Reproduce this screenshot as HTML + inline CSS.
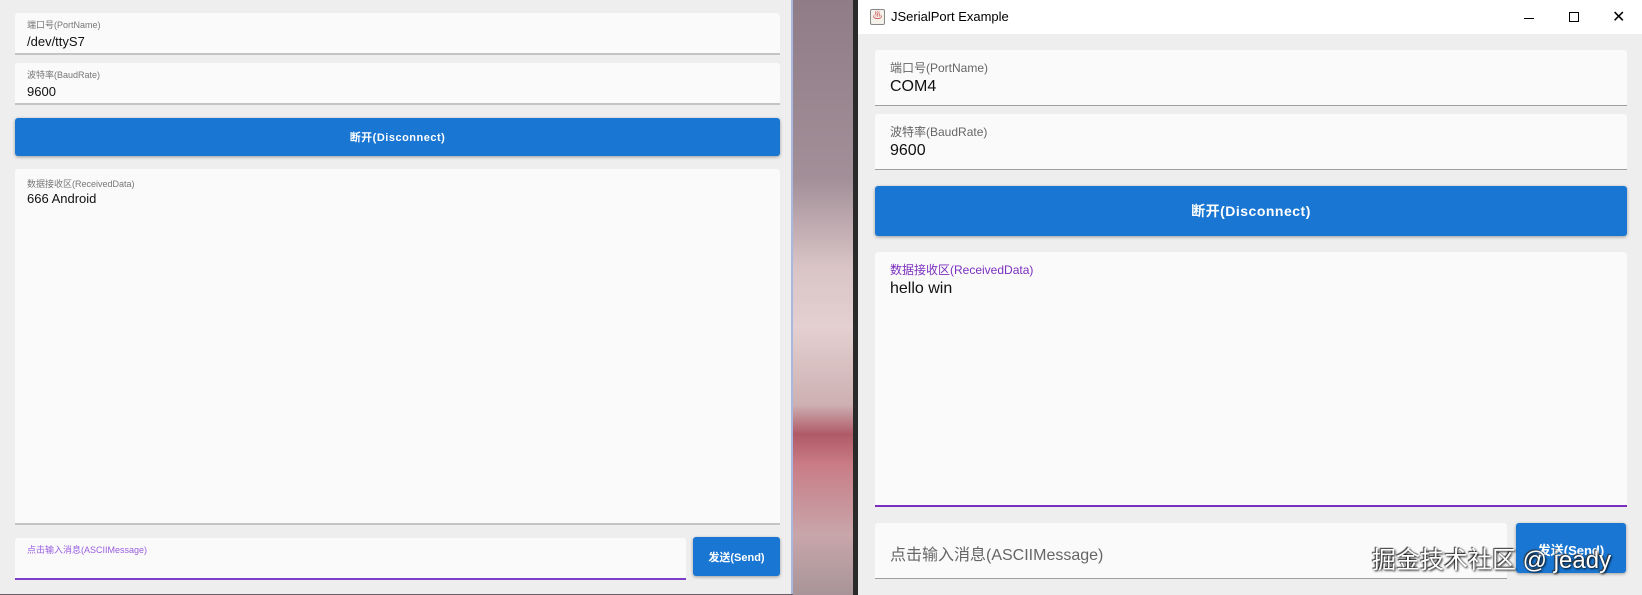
<!DOCTYPE html>
<html><head><meta charset="utf-8">
<style>
*{margin:0;padding:0;box-sizing:border-box}
body{width:1642px;height:595px;position:relative;overflow:hidden;background:#6a5a62;font-family:"Liberation Sans","Noto Sans CJK SC",sans-serif}
.abs{position:absolute}
#left{left:0;top:0;width:793px;height:594px;background:#eeeeee;border-right:2px solid #a9b8dc}
#gap{left:793px;top:0;width:60px;height:595px;background:linear-gradient(180deg,#8f7c86 0%,#a28f98 30%,#d9c4c6 45%,#e4d0d0 55%,#cdb0b2 68%,#b05a68 73%,#c97c86 78%,#c8a6aa 90%,#a89498 100%)}
#right{left:853px;top:0;width:789px;height:595px;background:#eeeeee;border-left:5px solid #2a2a2a}
.field{position:absolute;background:#fafafa;border-bottom:1px solid #9e9e9e;border-radius:3px 3px 0 0}
.lbl{position:absolute;color:#777}
.val{position:absolute;color:#111}
.btn{position:absolute;background:#1976d2;color:#fff;border-radius:3px;box-shadow:0 1px 3px rgba(0,0,0,.35);display:flex;align-items:center;justify-content:center;font-weight:bold}
</style></head><body>
<div id="left" class="abs">
  <div class="field" style="left:15px;top:13px;width:765px;height:42px;border-bottom:2px solid #c4c4c4">
    <div class="lbl" style="left:12px;top:5px;font-size:9px">端口号(PortName)</div>
    <div class="val" style="left:12px;top:21px;font-size:13px">/dev/ttyS7</div>
  </div>
  <div class="field" style="left:15px;top:63px;width:765px;height:42px;border-bottom:2px solid #c4c4c4">
    <div class="lbl" style="left:12px;top:5px;font-size:9px">波特率(BaudRate)</div>
    <div class="val" style="left:12px;top:21px;font-size:13px">9600</div>
  </div>
  <div class="btn" style="left:15px;top:118px;width:765px;height:38px;font-size:11px;letter-spacing:.5px">断开(Disconnect)</div>
  <div class="field" style="left:15px;top:169px;width:765px;height:356px;border-bottom:2px solid #c4c4c4">
    <div class="lbl" style="left:12px;top:8px;font-size:9px">数据接收区(ReceivedData)</div>
    <div class="val" style="left:12px;top:22px;font-size:13px">666 Android</div>
  </div>
  <div class="field" style="left:15px;top:538px;width:671px;height:42px;border-bottom:2px solid #7e3fc8">
    <div class="lbl" style="left:12px;top:5px;font-size:9px;color:#9a5ee0">点击输入消息(ASCIIMessage)</div>
  </div>
  <div class="btn" style="left:693px;top:537px;width:87px;height:39px;font-size:11px">发送(Send)</div>
</div>
<div id="gap" class="abs"></div>
<div id="right" class="abs">
  <div class="abs" style="left:0;top:0;width:784px;height:34px;background:#fff">
    <div class="abs" style="left:12px;top:9px;width:15px;height:16px;border:1px solid #888;border-radius:2px;background:#f4f0ea;font-size:10px;color:#c55;text-align:center;line-height:14px">♨</div>
    <div class="abs" style="left:33px;top:9px;font-size:13px;color:#000">JSerialPort Example</div>
    <div class="abs" style="left:666px;top:18px;width:10px;height:1px;background:#000"></div>
    <div class="abs" style="left:711px;top:12px;width:10px;height:10px;border:1px solid #000"></div>
    <div class="abs" style="left:754px;top:7px;font-size:16px;color:#000;font-weight:300">✕</div>
  </div>
  <div class="field" style="left:17px;top:50px;width:752px;height:56px">
    <div class="lbl" style="left:15px;top:9px;font-size:12px;color:#666">端口号(PortName)</div>
    <div class="val" style="left:15px;top:28px;font-size:16px">COM4</div>
  </div>
  <div class="field" style="left:17px;top:114px;width:752px;height:56px">
    <div class="lbl" style="left:15px;top:9px;font-size:12px;color:#666">波特率(BaudRate)</div>
    <div class="val" style="left:15px;top:28px;font-size:16px">9600</div>
  </div>
  <div class="btn" style="left:17px;top:186px;width:752px;height:50px;font-size:14px;letter-spacing:.5px">断开(Disconnect)</div>
  <div class="field" style="left:17px;top:252px;width:752px;height:255px;border-bottom:2px solid #7b2fbe">
    <div class="lbl" style="left:15px;top:9px;font-size:12px;color:#7b2fbe">数据接收区(ReceivedData)</div>
    <div class="val" style="left:15px;top:28px;font-size:16px">hello win</div>
  </div>
  <div class="field" style="left:17px;top:523px;width:632px;height:56px">
    <div class="lbl" style="left:15px;top:18px;font-size:16px;color:#666">点击输入消息(ASCIIMessage)</div>
  </div>
  <div class="btn" style="left:658px;top:523px;width:110px;height:50px;font-size:13px;align-items:flex-start;padding-top:17px">发送(Send)</div>
</div>
<div class="abs" style="left:1372px;top:540px;font-size:24px;color:#fff;text-shadow:1px 1px 2px #000,-1px -1px 1px #333;white-space:nowrap">掘金技术社区 @ jeady</div>
</body></html>
